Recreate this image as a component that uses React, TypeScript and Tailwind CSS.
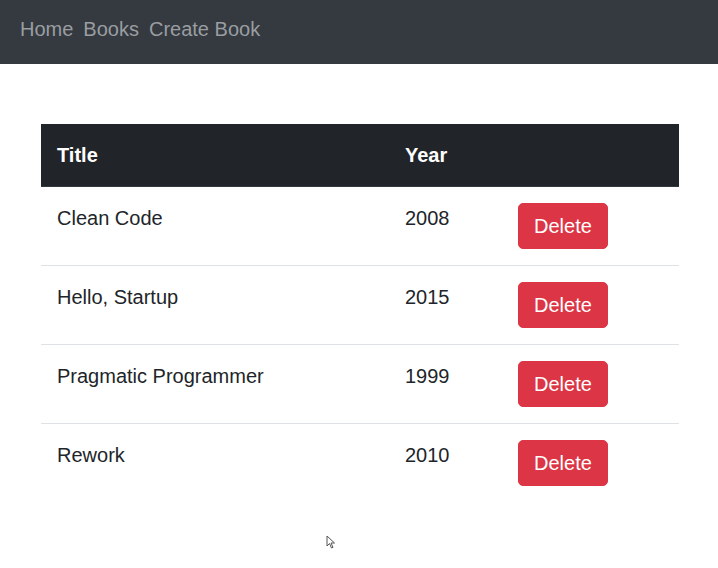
const books = [
  { title: 'Clean Code', year: 2008 },
  { title: 'Hello, Startup', year: 2015 },
  { title: 'Pragmatic Programmer', year: 1999 },
  { title: 'Rework', year: 2010 },
]

export default function App() {
  return (
    <div className="relative min-h-[568px] bg-white text-[20px] leading-[30px] text-[#212529]" style={{ fontFamily: '"Liberation Sans", Arial, sans-serif' }}>
      {/* Navbar */}
      <nav className="flex h-16 items-start gap-[10px] bg-[#343a40] px-5 pt-[14px] text-[#9a9da1]">
        <a>Home</a>
        <a>Books</a>
        <a>Create Book</a>
      </nav>

      {/* Books table */}
      <div className="mx-[41px] mt-[60px]">
        <table className="w-[638px] border-collapse text-left">
          <thead className="bg-[#212529] text-white">
            <tr>
              <th className="w-[348px] border-b border-[#32383e] p-4 font-bold">Title</th>
              <th className="w-[113px] border-b border-[#32383e] p-4 font-bold">Year</th>
              <th className="border-b border-[#32383e] p-4"></th>
            </tr>
          </thead>
          <tbody>
            {books.map((b, i) => (
              <tr key={b.title} className={i > 0 ? 'border-t border-[#dee2e6]' : ''}>
                <td className="p-4 align-top">{b.title}</td>
                <td className="p-4 align-top">{b.year}</td>
                <td className="p-4 align-top">
                  <button className="rounded-[5px] border border-[#dc3545] bg-[#dc3545] px-[15px] py-[7px] text-white">
                    Delete
                  </button>
                </td>
              </tr>
            ))}
          </tbody>
        </table>
      </div>

      {/* mouse pointer */}
      <svg className="absolute left-[326px] top-[535px]" width="10" height="14" viewBox="0 0 10 14">
        <path d="M1 1 L1 11 L3.5 8.5 L5.5 13 L7 12.3 L5 8 L8.5 8 Z" fill="white" stroke="#555" strokeWidth="1" />
      </svg>
    </div>
  )
}
